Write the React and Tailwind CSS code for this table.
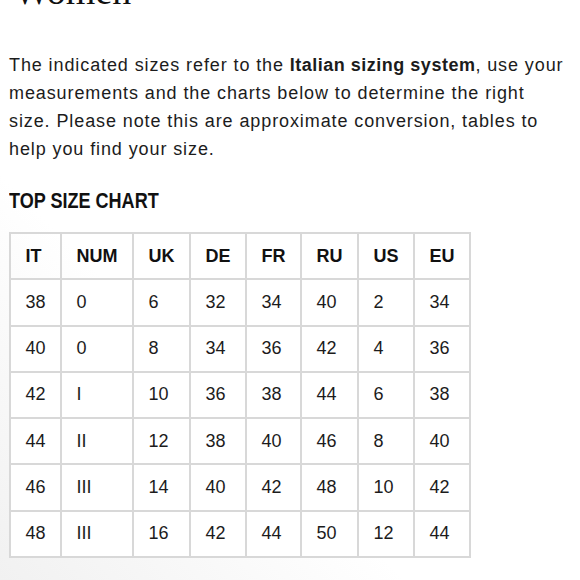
import React from 'react';

const headers = ['IT', 'NUM', 'UK', 'DE', 'FR', 'RU', 'US', 'EU'];

const rows = [
  ['38', '0', '6', '32', '34', '40', '2', '34'],
  ['40', '0', '8', '34', '36', '42', '4', '36'],
  ['42', 'I', '10', '36', '38', '44', '6', '38'],
  ['44', 'II', '12', '38', '40', '46', '8', '40'],
  ['46', 'III', '14', '40', '42', '48', '10', '42'],
  ['48', 'III', '16', '42', '44', '50', '12', '44'],
];

const App = () => {
  return (
    <div className="w-[580px] h-[580px] overflow-hidden bg-[linear-gradient(to_top_right,#f1f1f1_0%,#ffffff_35%)] text-[#1c1c1c] font-['Liberation_Sans',Arial,sans-serif]">
      {/* page title, cut off by the top edge */}
      <h1 className="mt-[-31px] pl-[14px] text-[38px] leading-[44px] font-['Liberation_Serif',serif] text-[#111]">
        Women
      </h1>

      <p className="mt-[38px] pl-[9px] pr-[5px] text-[18px] leading-[28px] tracking-[0.9px] whitespace-nowrap">
        The indicated sizes refer to the <b className="tracking-[0.5px]">Italian sizing system</b>, use your
        <br />
        measurements and the charts below to determine the right
        <br />
        size. Please note this are approximate conversion, tables to
        <br />
        help you find your size.
      </p>

      <h2 className="mt-[25px] pl-[9px] text-[22px] leading-[26px] font-bold text-[#111]">
        <span className="inline-block origin-left scale-x-[0.82]">TOP SIZE CHART</span>
      </h2>

      <table className="mt-[18px] ml-[9px] border-collapse text-[18px] leading-[21.3px]">
        <thead>
          <tr>
            {headers.map((h) => (
              <th key={h} className="border-2 border-[#d8d8d8] px-[14.5px] py-[11.5px] text-left font-bold text-[#111]">
                {h}
              </th>
            ))}
          </tr>
        </thead>
        <tbody>
          {rows.map((row, i) => (
            <tr key={i}>
              {row.map((cell, j) => (
                <td key={j} className="border-2 border-[#d8d8d8] px-[14.5px] py-[11.5px] text-left bg-white">
                  {cell}
                </td>
              ))}
            </tr>
          ))}
        </tbody>
      </table>
    </div>
  );
};

export default App;
